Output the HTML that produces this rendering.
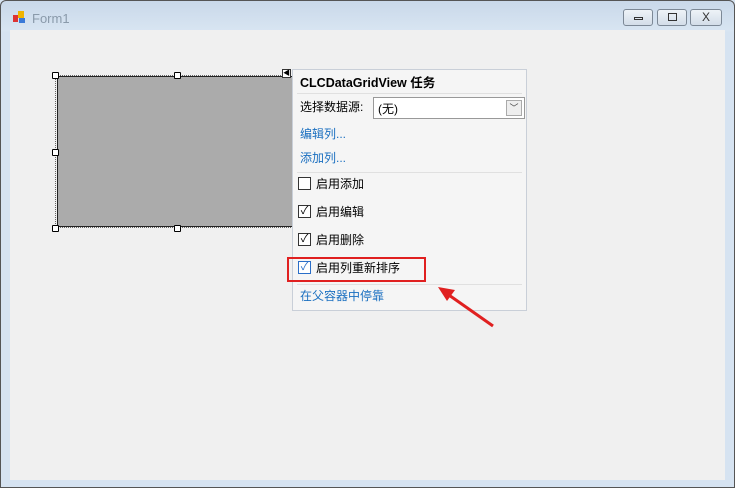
<!DOCTYPE html>
<html><head><style>
*{margin:0;padding:0;box-sizing:border-box}
body{width:735px;height:488px;overflow:hidden;background:#d6e3f1;font-family:"Liberation Sans","Noto Sans CJK SC",sans-serif;position:relative}
.frame{position:absolute;left:0;top:0;width:735px;height:488px;border:1px solid #555;border-radius:6px 6px 0 0;background:linear-gradient(#c9d8e9 0,#d8e5f2 30px,#d6e3f1 31px)}
.client{position:absolute;left:10px;top:30px;width:715px;height:450px;background:#f0f0f0}
.title{position:absolute;left:32px;top:11px;font-size:13px;color:#8a9aaa}
.btn{position:absolute;top:9px;height:17px;border:1px solid #7c8896;border-radius:3px;background:linear-gradient(#eef3f8,#d3dde9)}
.grid{position:absolute;left:57px;top:76px;width:240px;height:151px;background:#ababab;border:1px solid #222;border-right:none}
.sel{position:absolute;left:55px;top:75px;width:240px;height:153px;border:1px dotted #666;border-right:none}
.h{position:absolute;width:7px;height:7px;border:1px solid #000;background:#fff;border-radius:1px}
.panel{position:absolute;left:292px;top:69px;width:235px;height:242px;background:#f5f5f5;border:1px solid #c9cfd8;font-size:12px;color:#000}
.r{position:absolute;left:7px}
.lnk{color:#1a6fc0}
.cb{position:absolute;left:5px;width:13px;height:13px;border:1px solid #333;background:#fff}
.sep{position:absolute;left:4px;right:4px;height:1px;background:#e0e0e0}
</style></head><body>
<div class="frame"></div>
<svg style="position:absolute;left:13px;top:10px" width="14" height="14"><rect x="0" y="5" width="5" height="7" fill="#d33"/><rect x="5" y="1" width="6" height="7" fill="#f0b400"/><rect x="6" y="8" width="6" height="5" fill="#3a7ad8"/></svg>
<div class="title">Form1</div>
<div class="btn" style="left:623px;width:30px"><div style="position:absolute;left:10px;top:7px;width:9px;height:3px;border:1px solid #333"></div></div>
<div class="btn" style="left:657px;width:30px"><div style="position:absolute;left:10px;top:3px;width:9px;height:8px;border:1px solid #333"></div></div>
<div class="btn" style="left:690px;width:32px;text-align:center;font-size:12px;line-height:15px;color:#333">X</div>
<div class="client"></div>
<div class="grid"></div>
<div class="sel"></div>
<div class="h" style="left:52px;top:72px"></div><div class="h" style="left:174px;top:72px"></div>
<div class="h" style="left:52px;top:149px"></div>
<div class="h" style="left:52px;top:225px"></div><div class="h" style="left:174px;top:225px"></div>
<div style="position:absolute;left:282px;top:69px;width:9px;height:9px;border:1px solid #333;background:#fff;font-size:7px;line-height:7px;text-align:center">◀</div>
<div class="panel">
<div class="r" style="top:2px;font-weight:bold;font-size:12.5px">CLCDataGridView 任务</div>
<div class="sep" style="top:23px"></div>
<div class="r" style="top:28px">选择数据源:</div>
<div style="position:absolute;left:80px;top:27px;width:152px;height:22px;border:1px solid #999;background:#fff;font-size:12px;padding:2px 4px">(无)
<div style="position:absolute;right:2px;top:2px;width:16px;height:16px;border:1px solid #aaa;background:#eee;font-size:9px;text-align:center;line-height:14px;color:#444">﹀</div></div>
<div class="r lnk" style="top:55px">编辑列...</div>
<div class="r lnk" style="top:79px">添加列...</div>
<div class="sep" style="top:102px"></div>
<div class="cb" style="top:107px"></div><div class="r" style="left:23px;top:105px">启用添加</div>
<div class="cb" style="top:135px;font-size:11px;line-height:11px;text-align:center">✓</div><div class="r" style="left:23px;top:133px">启用编辑</div>
<div class="cb" style="top:163px;font-size:11px;line-height:11px;text-align:center">✓</div><div class="r" style="left:23px;top:161px">启用删除</div>
<div class="cb" style="top:191px;border-color:#2a6ec8;color:#2a6ec8;font-size:11px;line-height:11px;text-align:center">✓</div><div class="r" style="left:23px;top:189px">启用列重新排序</div>
<div class="sep" style="top:214px"></div>
<div class="r lnk" style="top:217px">在父容器中停靠</div>
</div>
<div style="position:absolute;left:287px;top:257px;width:139px;height:25px;border:2px solid #e02020"></div>
<svg style="position:absolute;left:0;top:0" width="735" height="488"><line x1="493" y1="326" x2="446" y2="293" stroke="#e02020" stroke-width="3"/><polygon points="438,287 455,290 447,301" fill="#e02020"/></svg>
</body></html>
